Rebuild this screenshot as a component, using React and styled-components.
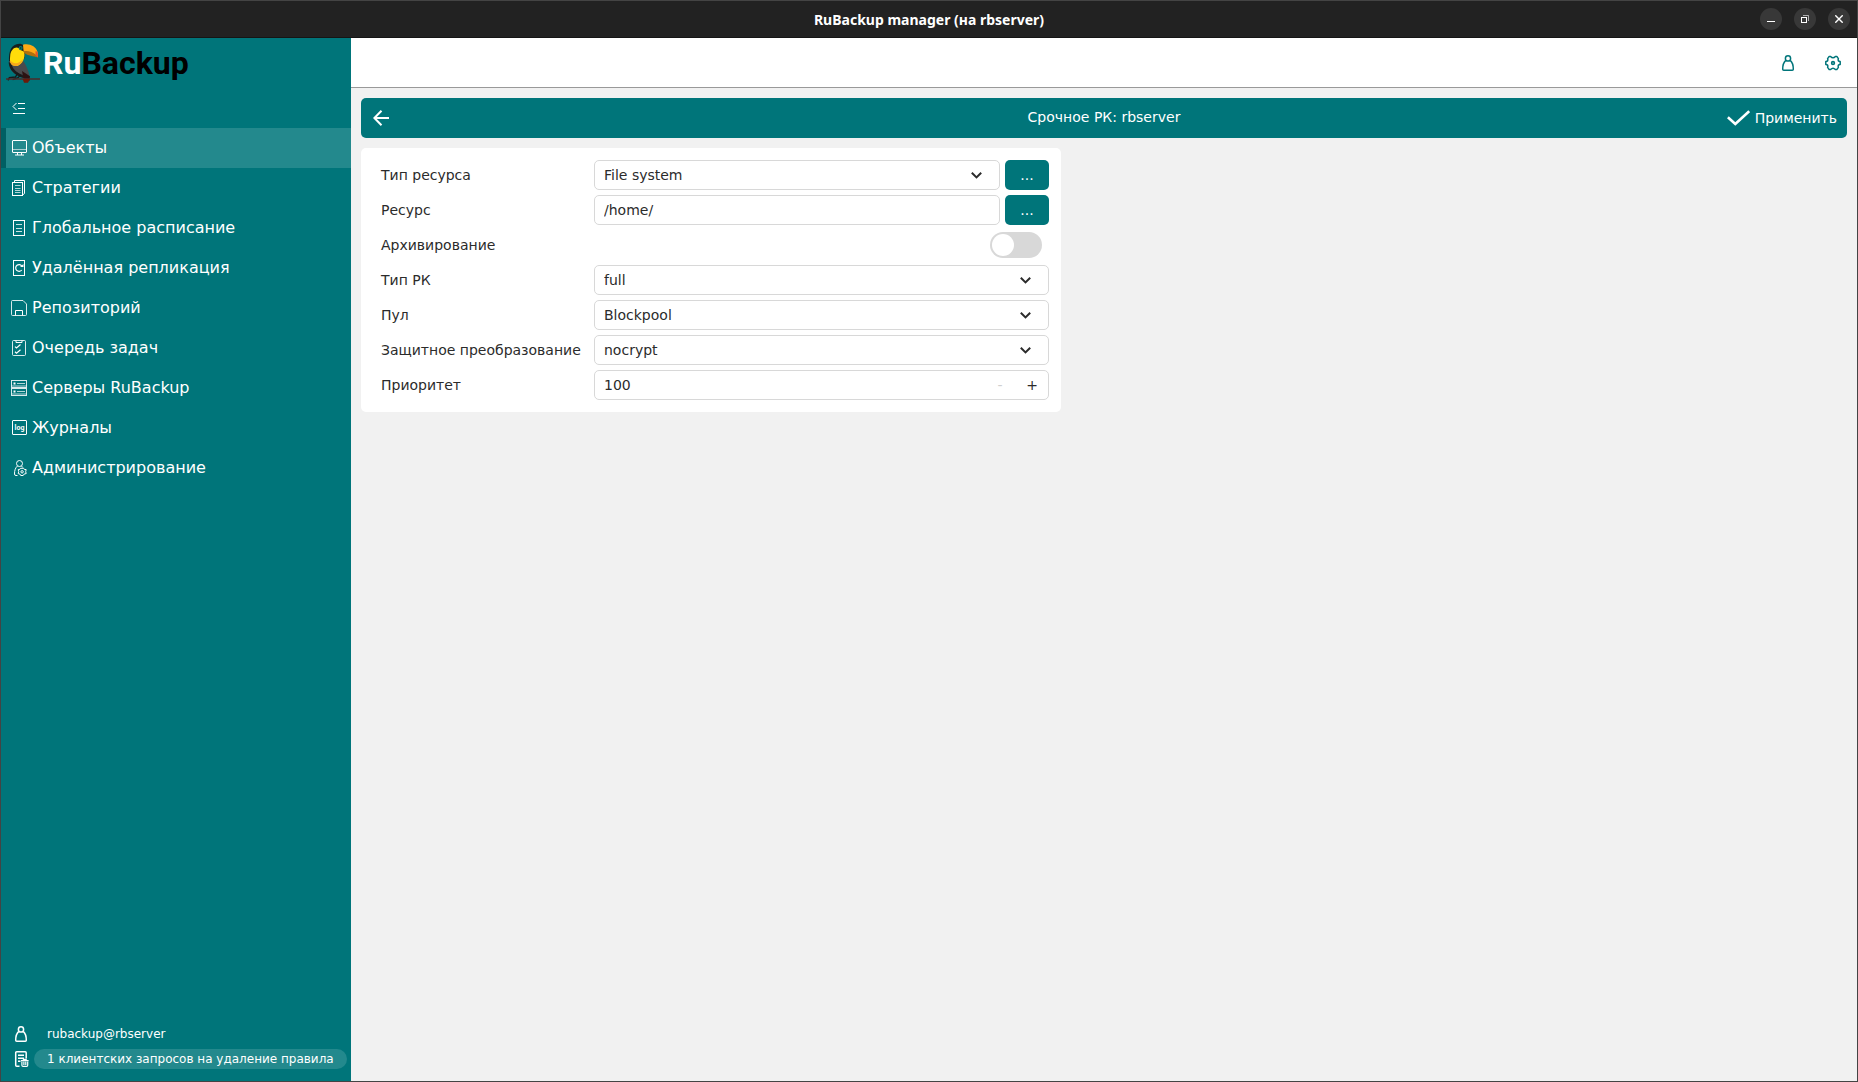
import React, { useState } from 'react'
import styled, { createGlobalStyle } from 'styled-components'


const GlobalStyle = createGlobalStyle`
    * {
        box-sizing: border-box;
    }

    body {
        margin: 0;
        background: #f1f1f1;
    }

    body, button, input, select {
        font-family: 'DejaVu Sans', sans-serif;
        font-size: 14px;
    }

    svg {
        display: block;
        flex: none;
    }
`

const Window = styled.div`
    display: flex;
    flex-direction: column;
    min-height: 100vh;
    border: 1px solid #444444;
`

const TitleBar = styled.header`
    display: grid;
    grid-template-columns: 1fr auto 1fr;
    align-items: center;
    height: 37px;
    padding: 0 7px;
    background: #222222;
    border-bottom: 1px solid #151515;
`

const WindowTitle = styled.h1`
    grid-column: 2;
    margin: 0;
    color: #ffffff;
    font-family: 'Noto Sans', sans-serif;
    font-size: 14px;
    font-weight: 700;
`

const WindowButtons = styled.div`
    display: flex;
    justify-content: flex-end;
    gap: 12px;
`

const PlainButton = styled.button`
    display: flex;
    align-items: center;
    justify-content: center;
    padding: 0;
    border: 0;
    background: none;
    color: inherit;
    cursor: pointer;
`

const RoundButton = styled(PlainButton)`
    width: 22px;
    height: 22px;
    border-radius: 50%;
    background: #383838;
    color: #ffffff;
`

const Body = styled.div`
    display: flex;
    flex: 1;
`

const Sidebar = styled.aside`
    display: flex;
    flex-direction: column;
    flex: none;
    width: 350px;
    padding-bottom: 12px;
    background: #00757a;
    color: #ffffff;
`

const Logo = styled.div`
    display: flex;
    align-items: center;
    gap: 3px;
    height: 49px;
    padding-left: 5px;
    font-family: Roboto, sans-serif;
    font-size: 32px;
    font-weight: 700;
`

const LogoDark = styled.span`
    color: #000000;
`

const CollapseRow = styled.div`
    display: flex;
    align-items: center;
    height: 41px;
    padding-left: 10px;
`

const Nav = styled.nav`
    display: flex;
    flex-direction: column;
    flex: 1;
`

const NavItem = styled.a`
    display: flex;
    align-items: center;
    gap: 5px;
    height: 40px;
    padding-left: 5px;
    border-left: 5px solid ${props => props.$active ? '#005f63' : 'transparent'};
    background: ${props => props.$active ? '#23898d' : 'none'};
    color: #ffffff;
    font-size: 16px;
    text-decoration: none;
`

const NavText = styled.span`
    padding-bottom: 2px;
`

const Status = styled.div`
    display: flex;
    flex-direction: column;
    gap: 5px;
`

const StatusRow = styled.div`
    display: flex;
    align-items: center;
    gap: 5px;
    height: 20px;
    padding-left: 12px;
    font-size: 12px;
`

const StatusText = styled.span`
    height: 20px;
    padding: 0 13px;
    border-radius: 10px;
    background: ${props => props.$filled ? '#23898d' : 'none'};
    line-height: 20px;
    white-space: nowrap;
`

const Main = styled.main`
    display: flex;
    flex-direction: column;
    flex: 1;
`

const TopBar = styled.div`
    display: flex;
    align-items: center;
    justify-content: flex-end;
    gap: 29px;
    height: 50px;
    padding-right: 16px;
    background: #ffffff;
    border-bottom: 1px solid #999999;
    color: #00757a;
`

const Content = styled.section`
    display: flex;
    flex-direction: column;
    gap: 10px;
    padding: 10px;
`

const PageBar = styled.div`
    display: grid;
    grid-template-columns: 1fr auto 1fr;
    align-items: center;
    height: 40px;
    padding: 0 10px;
    border-radius: 5px;
    background: #00757a;
    color: #ffffff;
`

const PageTitle = styled.h2`
    margin: 0;
    padding-bottom: 2px;
    font-size: 14px;
    font-weight: 400;
`

const BackButton = styled(PlainButton)`
    justify-self: start;
    padding: 0 2px;
`

const ApplyButton = styled(PlainButton)`
    justify-self: end;
    gap: 5px;
`

const Panel = styled.form`
    display: flex;
    flex-direction: column;
    gap: 5px;
    width: 700px;
    padding: 12px 12px 12px 20px;
    border-radius: 5px;
    background: #ffffff;
    color: #2b2b2b;
`

const Row = styled.div`
    display: grid;
    grid-template-columns: 208px 1fr;
    gap: 5px;
    align-items: center;
    height: 30px;

    label {
        padding-bottom: 1px;
    }
`

const Field = styled.div`
    display: flex;
    justify-content: ${props => props.$end ? 'flex-end' : 'stretch'};
    gap: 5px;
`

const SelectBox = styled.div`
    display: grid;
    grid-template-columns: 1fr 29px;
    align-items: center;
    flex: 1;

    select {
        grid-area: 1 / 1 / 2 / 3;
    }

    svg {
        grid-area: 1 / 2 / 2 / 3;
        pointer-events: none;
    }
`

const Select = styled.select`
    appearance: none;
    width: 100%;
    height: 30px;
    padding: 0 9px 1px;
    border: 1px solid #d8d8d8;
    border-radius: 5px;
    background: #ffffff;
    color: #2b2b2b;
`

const TextInput = styled.input`
    flex: 1;
    min-width: 0;
    height: 30px;
    padding: 0 9px;
    border: 1px solid #d8d8d8;
    border-radius: 5px;
    background: #ffffff;
    color: #2b2b2b;
`

const MoreButton = styled.button`
    width: 44px;
    height: 30px;
    padding: 0;
    border: 0;
    border-radius: 5px;
    background: #00757a;
    color: #ffffff;
`

const Switch = styled.input`
    appearance: none;
    display: flex;
    align-items: center;
    width: 52px;
    height: 26px;
    margin: 0 7px 0 0;
    padding: 0 2px;
    border-radius: 13px;
    background: ${props => props.checked ? '#00757a' : '#d8d8d8'};

    &::before {
        content: '';
        width: 22px;
        height: 22px;
        margin-left: ${props => props.checked ? 'auto' : '0'};
        border-radius: 50%;
        background: #ffffff;
    }
`

const Spin = styled.div`
    display: flex;
    flex: 1;
    height: 30px;
    border: 1px solid #d8d8d8;
    border-radius: 5px;

    input {
        flex: 1;
        min-width: 0;
        padding: 0 9px 1px;
        border: 0;
        background: none;
        color: #2b2b2b;
    }
`

const SpinButton = styled(PlainButton)`
    width: 32px;
    padding-bottom: 1px;
    color: #2b2b2b;

    &:disabled {
        color: #d0d0d0;
    }
`


const Icon = ({ children, size = 16, ...rest }) => (
    <svg width={size} height={size} viewBox={`0 0 ${size} ${size}`} fill='none' stroke='currentColor' aria-hidden='true' {...rest}>
        {children}
    </svg>
)

const UserIcon = () => (
    <Icon strokeWidth='1.5'>
        <circle cx='8' cy='3.4' r='2.6' />
        <path d='M5.8 5.4C3.6 7.3 2.7 10 2.7 14.2Q2.7 15.2 3.7 15.2H12.3Q13.3 15.2 13.3 14.2C13.3 10 12.4 7.3 10.2 5.4' />
    </Icon>
)

const GearIcon = () => (
    <Icon strokeWidth='1.5' strokeLinejoin='round'>
        <path d='M4.2 1.4H5.6Q8 4 10.4 1.4H11.8L13.4 3.6Q12.4 6.4 15.2 6.6V9.4Q12.4 9.6 13.4 12.4L11.8 14.6H10.4Q8 12 5.6 14.6H4.2L2.6 12.4Q3.6 9.6 .8 9.4V6.6Q3.6 6.4 2.6 3.6Z' />
        <circle cx='8' cy='8' r='1.4' strokeWidth='1.6' />
    </Icon>
)

const RequestIcon = () => (
    <Icon strokeWidth='1.5'>
        <path d='M6.5 15.2H3.7Q2.7 15.2 2.7 14.2V1.8Q2.7 .8 3.7 .8H12.2Q13.2 .8 13.2 1.8V7.5' />
        <path d='M5 4.3H11M5 7.3H11M5 10.3H7.5' />
        <path d='M8 9.6H15.6M10.4 9V8.4H13.2V9' strokeWidth='1.2' />
        <path d='M8.9 10.6V14.2Q8.9 15.4 10 15.4H13.6Q14.7 15.4 14.7 14.2V10.6M10.9 10.6V14M12.8 10.6V14' strokeWidth='1.2' />
    </Icon>
)

const CollapseIcon = () => (
    <Icon>
        <path d='M5.5 3L2 6.5L5.5 10' strokeWidth='1' />
        <path d='M7 3.5H14M7 8.5H14M2 13.5H14' />
    </Icon>
)

const ChevronIcon = () => (
    <Icon size={11} strokeWidth='2'>
        <path d='M.8 2.8L5.5 7.4L10.2 2.8' />
    </Icon>
)

const BackIcon = () => (
    <Icon strokeWidth='2'>
        <path d='M8.5 .8L1.4 8L8.5 15.2M1 8H16' />
    </Icon>
)

const CheckIcon = () => (
    <svg width='23' height='16' viewBox='0 0 23 16' fill='none' stroke='currentColor' strokeWidth='2.6' aria-hidden='true'>
        <path d='M.9 7.2L8.3 14L22.2 1.2' />
    </svg>
)

const ObjectsIcon = () => (
    <Icon>
        <rect x='1.5' y='.5' width='14' height='12' rx='.5' />
        <path d='M1.5 9.5H15.5' opacity='.6' />
        <path d='M6.5 13V15M10.5 13V15M4 15H13' />
    </Icon>
)

const StrategyIcon = () => (
    <Icon>
        <path d='M3.5 2V.5H13.5V13.5L11.5 15' />
        <rect x='1.5' y='2.5' width='10' height='13' />
        <path d='M4 5.5H9.5M4 8.5H9.5M4 10.5H9.5M4 12.5H9.5' opacity='.7' />
    </Icon>
)

const ScheduleIcon = () => (
    <Icon>
        <rect x='2.5' y='.5' width='11' height='15' />
        <path d='M5 4.5H11M5 8.5H11M5 11.5H11' opacity='.8' />
    </Icon>
)

const ReplicationIcon = () => (
    <Icon>
        <rect x='2.5' y='.5' width='11' height='15' />
        <path d='M10.8 10A3.4 3.4 0 1 1 11 6.2' strokeWidth='1.2' />
        <path d='M9 7H12.5V4Z' fill='currentColor' stroke='none' />
    </Icon>
)

const RepositoryIcon = () => (
    <Icon>
        <path d='M1.5 .5H12L15.5 4V14.5Q15.5 15.5 14.5 15.5H1.5Q.5 15.5 .5 14.5V1.5Q.5 .5 1.5 .5Z' opacity='.85' />
        <path d='M4.5 15.5V10.5H11.5V15.5' />
    </Icon>
)

const QueueIcon = () => (
    <Icon>
        <rect x='1.5' y='.5' width='13' height='15' rx='1' opacity='.85' />
        <path d='M5 .5V2.5H11V.5' />
        <path d='M4 6.6L5.5 8L9.5 4.5M4 11.8L5.5 13.2L9.5 9.7' strokeWidth='1.2' />
    </Icon>
)

const ServersIcon = () => (
    <Icon>
        <rect x='.5' y='.5' width='15' height='7' opacity='.85' />
        <rect x='.5' y='8.5' width='15' height='7' opacity='.85' />
        <path d='M6 3.5H14M6 11.5H14M.5 6H15.5M.5 14H15.5' opacity='.7' />
        <path d='M2.5 3.5H4.5M2.5 11.5H4.5' strokeWidth='2' />
    </Icon>
)

const LogIcon = () => (
    <Icon>
        <rect x='1.5' y='.5' width='14' height='14' rx='.5' />
        <text x='8.5' y='10' textAnchor='middle' fill='currentColor' stroke='none' fontSize='7' fontWeight='700' fontFamily='Roboto, sans-serif'>log</text>
    </Icon>
)

const AdminIcon = () => (
    <Icon>
        <circle cx='8.5' cy='3.5' r='3' />
        <path d='M6.5 6C4.3 7.8 3.5 10.5 3.5 14Q3.5 15.5 5 15.5H6.5M10.5 6L11.8 7.5' />
        <path d='M9.5 8.3H12.5L13.2 9.3L15.2 9.6L14.7 11.6L15.2 13.6L13.2 14L12.2 15.5H9.7L8.9 14L7.2 13.6L7.7 11.6L7.2 9.6L8.9 9.3Z' />
        <circle cx='11.1' cy='11.8' r='1.2' />
    </Icon>
)

const Toucan = () => (
    <svg width='34' height='40' viewBox='18 18 102 120' aria-hidden='true'>
        <path d='M27 76C25 40 34 22 58 20C68 20 76 26 76 40L74 62L60 82Z' fill='#15201f' />
        <path d='M27 72C26 98 42 114 72 124L88 126C90 108 80 88 68 68Z' fill='#4a4a4c' />
        <path d='M26 76C27 98 42 114 72 124L68 114C48 106 36 94 34 78Z' fill='#1b1b1c' />
        <path d='M66 102L90 118L88 132L70 124Z' fill='#2c1212' />
        <path d='M31 52C34 36 46 27 56 33C60 42 70 40 73 46C76 62 68 82 52 87C38 89 28 80 30 64Z' fill='#ffdc0a' />
        <path d='M30 70C42 84 58 80 69 66C65 80 56 87 48 87C38 88 30 82 30 70Z' fill='#f7a81c' />
        <path d='M69 23C86 18 108 26 113 46L113 61C100 48 84 46 71 46Z' fill='#ffa914' />
        <path d='M71 43C84 40 98 46 106 52L113 61C100 57 84 57 72 47Z' fill='#b0720c' />
        <path d='M107 42L113 45L114 62L106 54Z' fill='#e5562a' />
        <circle cx='62' cy='33' r='6' fill='#0c7d70' />
        <circle cx='62' cy='33' r='2.5' fill='#062a28' />
        <path d='M54 108L46 120L28 122L24 130M62 114L54 122L38 128' stroke='#17191a' strokeWidth='4' fill='none' />
        <path d='M18 126H120' stroke='#4c2b2a' strokeWidth='4' />
        <path d='M68 126H90L84 137H72Z' fill='#6b1a0a' />
    </svg>
)

const navItems = [
    { title: 'Объекты', icon: ObjectsIcon },
    { title: 'Стратегии', icon: StrategyIcon },
    { title: 'Глобальное расписание', icon: ScheduleIcon },
    { title: 'Удалённая репликация', icon: ReplicationIcon },
    { title: 'Репозиторий', icon: RepositoryIcon },
    { title: 'Очередь задач', icon: QueueIcon },
    { title: 'Серверы RuBackup', icon: ServersIcon },
    { title: 'Журналы', icon: LogIcon },
    { title: 'Администрирование', icon: AdminIcon }
]

const SelectField = ({ id, options }) => (
    <SelectBox>
        <Select id={id}>
            {options.map((option) => <option key={option}>{option}</option>)}
        </Select>
        <ChevronIcon />
    </SelectBox>
)

const BackupForm = () => {
    const [resource, setResource] = useState('/home/')
    const [archiving, setArchiving] = useState(false)
    const [priority, setPriority] = useState(100)

    return (
        <Panel>
            <Row>
                <label htmlFor='resourceType'>Тип ресурса</label>
                <Field>
                    <SelectField id='resourceType' options={['File system']} />
                    <MoreButton type='button' aria-label='Параметры типа ресурса'>...</MoreButton>
                </Field>
            </Row>
            <Row>
                <label htmlFor='resource'>Ресурс</label>
                <Field>
                    <TextInput id='resource' value={resource} onChange={(e) => setResource(e.target.value)} />
                    <MoreButton type='button' aria-label='Выбрать ресурс'>...</MoreButton>
                </Field>
            </Row>
            <Row>
                <label htmlFor='archiving'>Архивирование</label>
                <Field $end>
                    <Switch id='archiving' type='checkbox' checked={archiving} onChange={(e) => setArchiving(e.target.checked)} />
                </Field>
            </Row>
            <Row>
                <label htmlFor='backupType'>Тип РК</label>
                <Field><SelectField id='backupType' options={['full', 'incremental', 'differential']} /></Field>
            </Row>
            <Row>
                <label htmlFor='pool'>Пул</label>
                <Field><SelectField id='pool' options={['Blockpool']} /></Field>
            </Row>
            <Row>
                <label htmlFor='crypto'>Защитное преобразование</label>
                <Field><SelectField id='crypto' options={['nocrypt']} /></Field>
            </Row>
            <Row>
                <label htmlFor='priority'>Приоритет</label>
                <Field>
                    <Spin>
                        <input id='priority' inputMode='numeric' value={priority} onChange={(e) => setPriority(Number(e.target.value) || 100)} />
                        <SpinButton type='button' aria-label='Уменьшить' disabled={priority <= 100} onClick={() => setPriority(priority - 1)}>-</SpinButton>
                        <SpinButton type='button' aria-label='Увеличить' onClick={() => setPriority(priority + 1)}>+</SpinButton>
                    </Spin>
                </Field>
            </Row>
        </Panel>
    )
}

const App = () => (
    <Window>
        <GlobalStyle />
        <TitleBar>
            <WindowTitle>RuBackup manager (на rbserver)</WindowTitle>
            <WindowButtons>
                <RoundButton aria-label='Свернуть'>
                    <Icon size={8}><path d='M0 6.5H8' /></Icon>
                </RoundButton>
                <RoundButton aria-label='Восстановить'>
                    <Icon size={8}>
                        <rect x='.5' y='2.5' width='5' height='5' />
                        <path d='M2 .5H7.5V6' opacity='.6' />
                    </Icon>
                </RoundButton>
                <RoundButton aria-label='Закрыть'>
                    <Icon size={8} strokeWidth='1.4'><path d='M.3 .3L7.7 7.7M7.7 .3L.3 7.7' /></Icon>
                </RoundButton>
            </WindowButtons>
        </TitleBar>
        <Body>
            <Sidebar>
                <Logo>
                    <Toucan />
                    <div>Ru<LogoDark>Backup</LogoDark></div>
                </Logo>
                <CollapseRow>
                    <PlainButton aria-label='Свернуть меню'><CollapseIcon /></PlainButton>
                </CollapseRow>
                <Nav>
                    {navItems.map(({ title, icon: NavIcon }, i) => (
                        <NavItem key={title} href='#' $active={i === 0}>
                            <NavIcon />
                            <NavText>{title}</NavText>
                        </NavItem>
                    ))}
                </Nav>
                <Status>
                    <StatusRow>
                        <UserIcon />
                        <StatusText>rubackup@rbserver</StatusText>
                    </StatusRow>
                    <StatusRow>
                        <RequestIcon />
                        <StatusText $filled>1 клиентских запросов на удаление правила</StatusText>
                    </StatusRow>
                </Status>
            </Sidebar>
            <Main>
                <TopBar>
                    <PlainButton aria-label='Пользователь'><UserIcon /></PlainButton>
                    <PlainButton aria-label='Настройки'><GearIcon /></PlainButton>
                </TopBar>
                <Content>
                    <PageBar>
                        <BackButton aria-label='Назад'><BackIcon /></BackButton>
                        <PageTitle>Срочное РК: rbserver</PageTitle>
                        <ApplyButton>
                            <CheckIcon />
                            Применить
                        </ApplyButton>
                    </PageBar>
                    <BackupForm />
                </Content>
            </Main>
        </Body>
    </Window>
)

export default App
